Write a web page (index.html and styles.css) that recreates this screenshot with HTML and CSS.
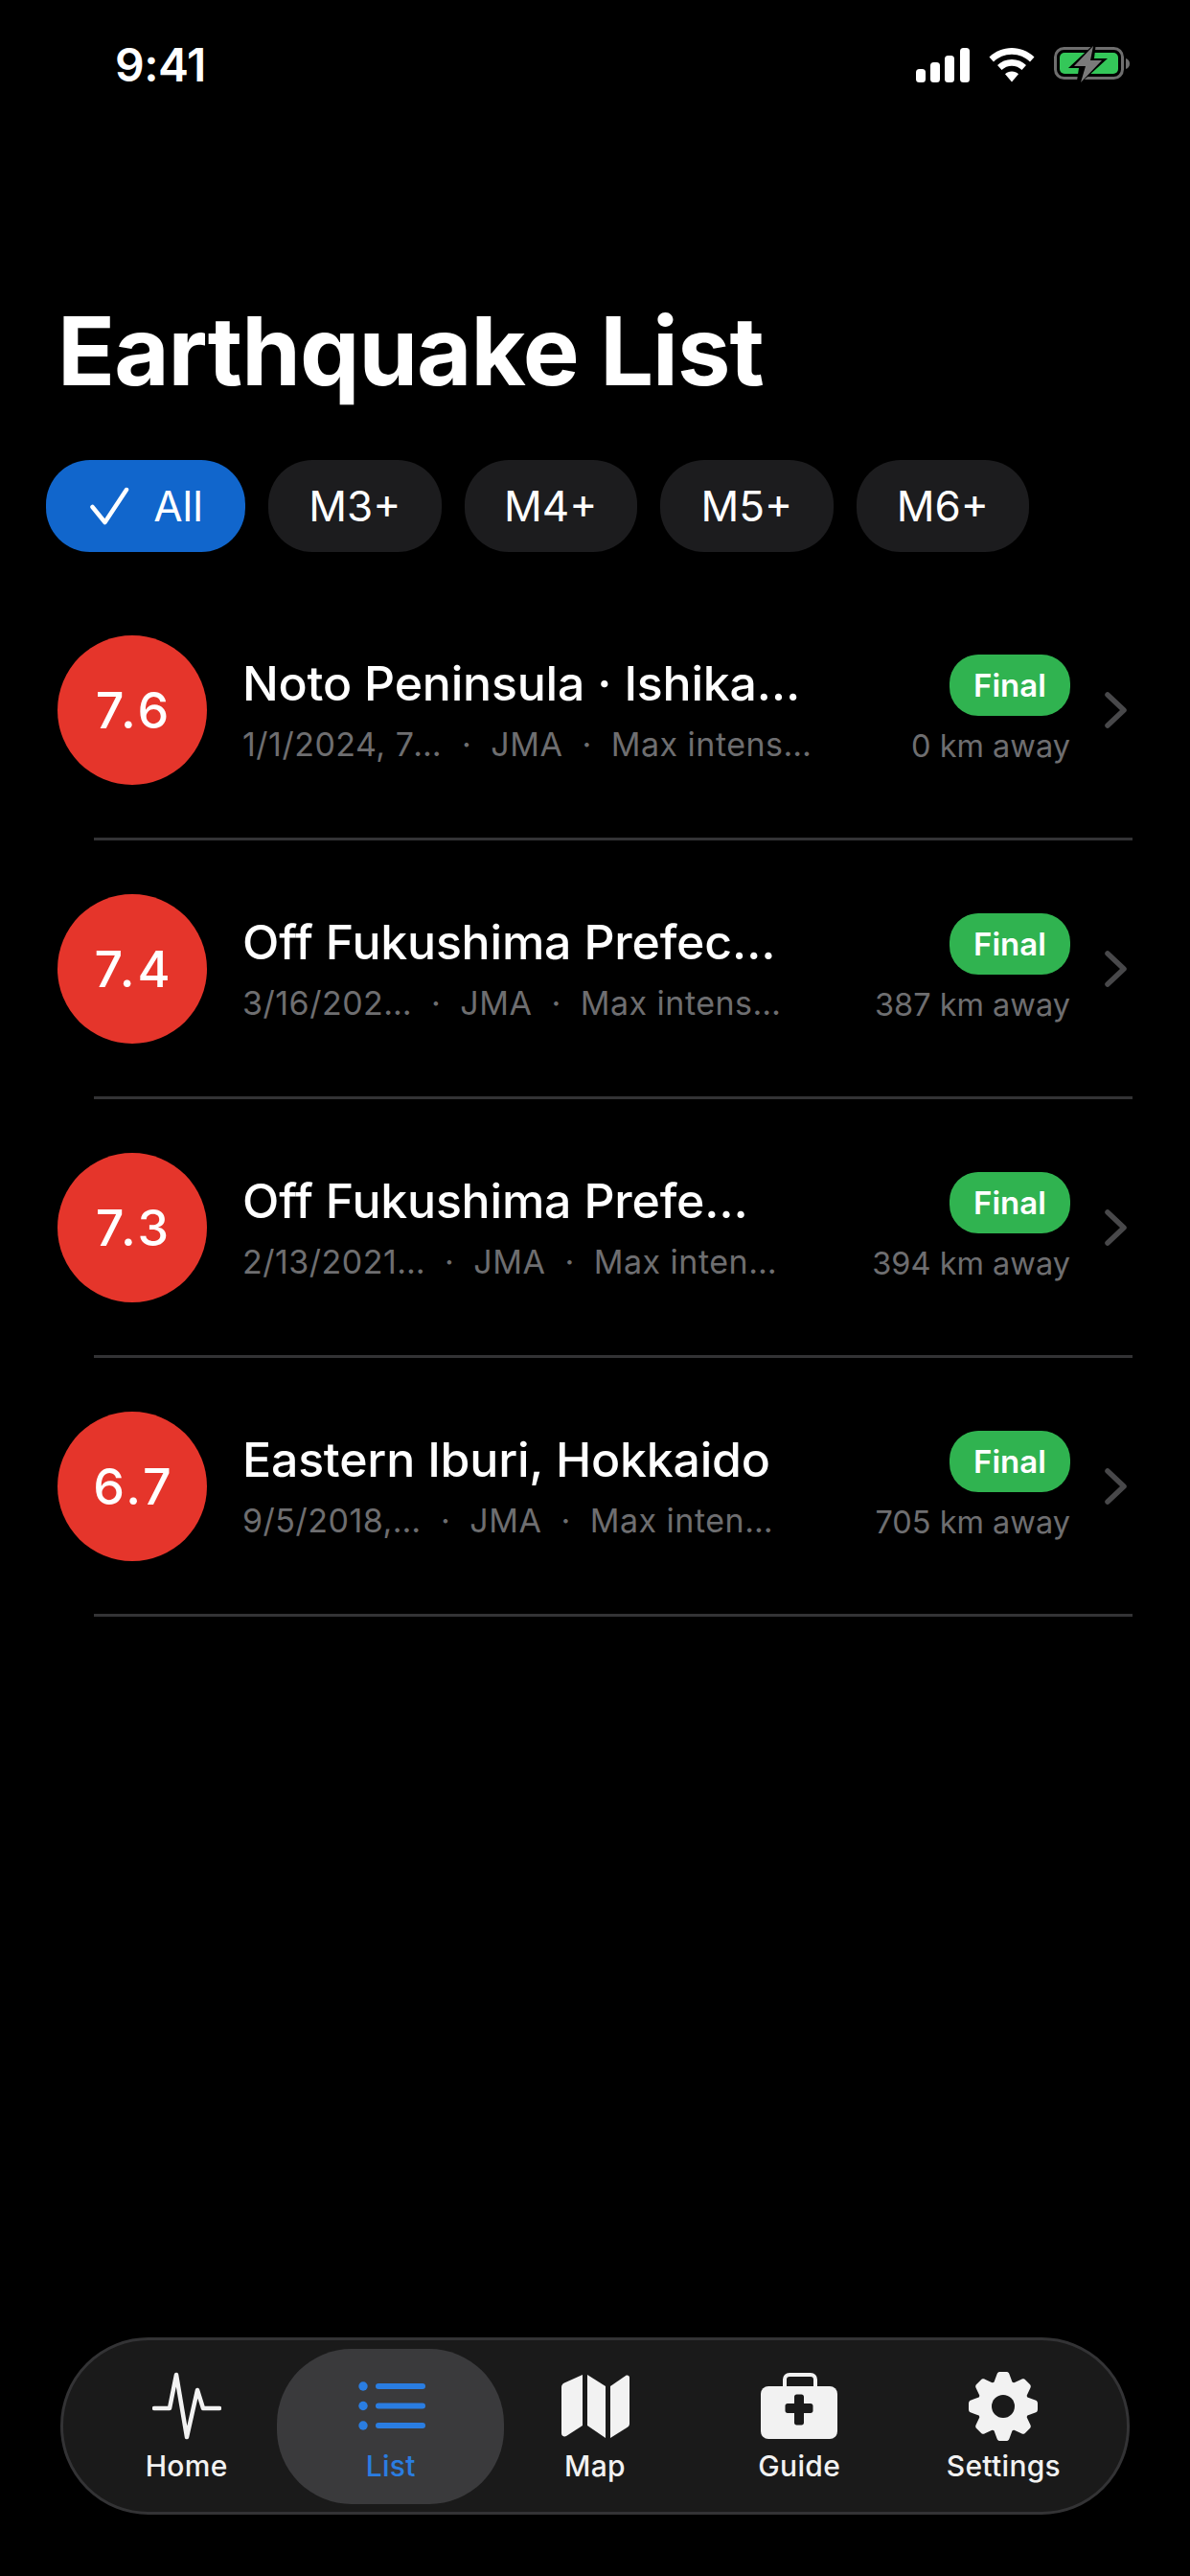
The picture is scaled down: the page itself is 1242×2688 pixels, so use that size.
FILE: index.html
```html
<!DOCTYPE html>
<html lang="en">
<head>
<meta charset="utf-8">
<title>Earthquake List</title>
<link rel="stylesheet" href="styles.css">
</head>
<body>
<div class="page">
  <header class="status">
    <span class="clock">9:41</span>
    <div class="status-icons">
      <svg class="ic-signal" width="56" height="36" viewBox="0 0 56 36"><rect x="0" y="22" width="10" height="14" rx="3.5"/><rect x="15" y="15" width="10" height="21" rx="3.5"/><rect x="30" y="8" width="10" height="28" rx="3.5"/><rect x="46" y="0" width="10" height="36" rx="3.5"/></svg>
      <svg class="ic-wifi" width="48" height="36" viewBox="0 0 48 36"><path d="M24 0C33 0 41 3.500 47.500 9.500L43 14.500C38 9.500 31.500 6.700 24 6.700S10 9.500 5 14.500L.5 9.500C7 3.500 15 0 24 0Z"/><path d="M24 12C30 12 35 14.300 39 18L34.500 23C31.500 20.300 28 18.800 24 18.800S16.500 20.300 13.500 23L9 18C13 14.300 18 12 24 12Z"/><path d="M24 24.500C26.800 24.500 29 25.500 31 27.200L24 35.500L17 27.200C19 25.500 21.200 24.500 24 24.500Z"/></svg>
      <svg class="ic-battery" width="80" height="44" viewBox="0 0 80 44"><rect x="1.500" y="5.500" width="70" height="31" rx="9" fill="none" stroke="#6e6e6e" stroke-width="3"/><path d="M75 16c2.500 .8 4 2.800 4 5.500s-1.500 4.700-4 5.500Z" fill="#6e6e6e"/><rect x="6" y="10" width="61" height="22" rx="5" fill="#34c759"/><path d="M44 -1L15 26H26L23 46L56 16H42Z" fill="#000"/><path d="M41 3L21 24H33L28 41L50 18H38Z" fill="#7a7a7a"/></svg>
    </div>
  </header>

  <h1 class="title">Earthquake List</h1>

  <nav class="chips">
    <button class="chip chip-on"><svg class="check" width="44" height="44" viewBox="0 0 44 44"><path d="M4.500 23L17.500 39L40 5" fill="none" stroke="#fff" stroke-width="4.500" stroke-linecap="round" stroke-linejoin="round"/></svg>All</button>
    <button class="chip">M3+</button>
    <button class="chip">M4+</button>
    <button class="chip">M5+</button>
    <button class="chip">M6+</button>
  </nav>

  <main class="list">
    <article class="row">
      <div class="mag">7.6</div>
      <div class="main">
        <div class="name">Noto Peninsula · Ishikawa</div>
        <div class="sub"><span class="date date-a">1/1/2024, 7:10:00 AM</span><span class="dot">·</span><span>JMA</span><span class="dot">·</span><span class="fit">Max intensity 7</span></div>
      </div>
      <div class="side"><span class="badge">Final</span><span class="dist">0 km away</span></div>
      <svg class="chev" width="24" height="38" viewBox="0 0 24 38"><path d="M3 3L20 19L3 35" fill="none" stroke="#48484a" stroke-width="5.500" stroke-linecap="round" stroke-linejoin="round"/></svg>
    </article>
    <div class="rule"></div>
    <article class="row">
      <div class="mag">7.4</div>
      <div class="main">
        <div class="name">Off Fukushima Prefecture</div>
        <div class="sub"><span class="date date-b">3/16/2022, 11:36:00 PM</span><span class="dot">·</span><span>JMA</span><span class="dot">·</span><span class="fit">Max intensity 6+</span></div>
      </div>
      <div class="side"><span class="badge">Final</span><span class="dist">387 km away</span></div>
      <svg class="chev" width="24" height="38" viewBox="0 0 24 38"><path d="M3 3L20 19L3 35" fill="none" stroke="#48484a" stroke-width="5.500" stroke-linecap="round" stroke-linejoin="round"/></svg>
    </article>
    <div class="rule"></div>
    <article class="row">
      <div class="mag">7.3</div>
      <div class="main">
        <div class="name name-short">Off Fukushima Prefecture</div>
        <div class="sub"><span class="date date-c">2/13/2021, 11:07:00 PM</span><span class="dot">·</span><span>JMA</span><span class="dot">·</span><span class="fit">Max intensity 6+</span></div>
      </div>
      <div class="side"><span class="badge">Final</span><span class="dist">394 km away</span></div>
      <svg class="chev" width="24" height="38" viewBox="0 0 24 38"><path d="M3 3L20 19L3 35" fill="none" stroke="#48484a" stroke-width="5.500" stroke-linecap="round" stroke-linejoin="round"/></svg>
    </article>
    <div class="rule"></div>
    <article class="row">
      <div class="mag">6.7</div>
      <div class="main">
        <div class="name">Eastern Iburi, Hokkaido</div>
        <div class="sub"><span class="date date-d">9/5/2018, 3:07:00 AM</span><span class="dot">·</span><span>JMA</span><span class="dot">·</span><span class="fit">Max intensity 7</span></div>
      </div>
      <div class="side"><span class="badge">Final</span><span class="dist">705 km away</span></div>
      <svg class="chev" width="24" height="38" viewBox="0 0 24 38"><path d="M3 3L20 19L3 35" fill="none" stroke="#48484a" stroke-width="5.500" stroke-linecap="round" stroke-linejoin="round"/></svg>
    </article>
    <div class="rule"></div>
  </main>

  <footer class="tabs">
    <div class="tab">
      <svg width="72" height="72" viewBox="0 0 72 72"><path d="M2 38H18L25 3L36 68L47 19L53 38H70" fill="none" stroke="#f2f2f2" stroke-width="4.500" stroke-linecap="round" stroke-linejoin="round"/></svg>
      <span>Home</span>
    </div>
    <div class="tab tab-on">
      <svg width="72" height="72" viewBox="0 0 72 72" fill="#2a7de1"><circle cx="7" cy="15" r="4.700"/><circle cx="7" cy="35.500" r="4.700"/><circle cx="7" cy="56" r="4.700"/><rect x="20" y="12" width="52" height="6" rx="3"/><rect x="20" y="32.500" width="52" height="6" rx="3"/><rect x="20" y="53" width="52" height="6" rx="3"/></svg>
      <span>List</span>
    </div>
    <div class="tab">
      <svg width="72" height="72" viewBox="0 0 72 72" fill="#f2f2f2"><path d="M23 3V56L6 67C3.500 68 1 67 1 64V16C1 14 2 12.500 4 11.500Z"/><path d="M28 3L47 15V69L28 56Z"/><path d="M52 15L68 4C70 3 72 4 72 6V54C72 56 71 57 69.500 58L52 69Z"/></svg>
      <span>Map</span>
    </div>
    <div class="tab">
      <svg width="80" height="72" viewBox="0 0 80 72"><path d="M25 15V8C25 5 27 3 30 3H52C55 3 57 5 57 8V15" fill="none" stroke="#f2f2f2" stroke-width="4"/><rect x="0" y="15" width="80" height="55" rx="8" fill="#f2f2f2"/><path d="M35 26C35 24.500 36 23.500 37.500 23.500H42.500C44 23.500 45 24.500 45 26V33H52C53.500 33 54.500 34 54.500 35.500V40.500C54.500 42 53.500 43 52 43H45V53C45 54.500 44 55.500 42.500 55.500H37.500C36 55.500 35 54.500 35 53V43H28C26.500 43 25.500 42 25.500 40.500V35.500C25.500 34 26.500 33 28 33H35Z" fill="#1a1a1a"/></svg>
      <span>Guide</span>
    </div>
    <div class="tab">
      <svg width="74" height="72" viewBox="-37 -36 74 72">
        <defs><path id="tooth" d="M-10 -24L-6.500 -33.500C-6 -35.500 -4.500 -36 -3 -36H3C4.500 -36 6 -35.500 6.500 -33.500L10 -24Z"/></defs>
        <g fill="#f2f2f2">
          <circle r="27"/>
          <use href="#tooth"/>
          <use href="#tooth" transform="rotate(45)"/>
          <use href="#tooth" transform="rotate(90)"/>
          <use href="#tooth" transform="rotate(135)"/>
          <use href="#tooth" transform="rotate(180)"/>
          <use href="#tooth" transform="rotate(225)"/>
          <use href="#tooth" transform="rotate(270)"/>
          <use href="#tooth" transform="rotate(315)"/>
        </g>
        <circle r="12" fill="#1a1a1a"/>
      </svg>
      <span>Settings</span>
    </div>
  </footer>
</div>
</body>
</html>
```

FILE: styles.css
```css
* { box-sizing: border-box; }
html, body { margin: 0; padding: 0; background: #000; }
body { font-family: Inter, "Noto Sans", sans-serif; color: #fff; }

.page {
  width: 1242px;
  height: 2688px;
  display: flex;
  flex-direction: column;
  overflow: hidden;
}

.status {
  display: flex;
  justify-content: space-between;
  align-items: center;
  height: 44px;
  margin-top: 46px;
  padding: 0 62px 0 120px;
}
.clock { font-size: 48px; font-weight: 600; line-height: 44px; letter-spacing: -0.5px; }
.status-icons { display: flex; align-items: center; gap: 20px; }
.status-icons svg { display: block; fill: #fff; }
.ic-battery { margin-top: -2px; }

.title {
  margin: 216px 0 0 60px;
  font-size: 99px;
  line-height: 120px;
  font-weight: 700;
  letter-spacing: -1px;
}

.chips {
  display: flex;
  gap: 24px;
  margin: 54px 0 0 48px;
}
.chip {
  height: 96px;
  width: 180.5px;
  border: 0;
  border-radius: 46px;
  background: #1c1c1e;
  color: #fff;
  font-family: inherit;
  font-size: 44px;
  display: flex;
  align-items: center;
  justify-content: center;
  padding: 0;
}
.chip-on { width: 208px; background: #1166cc; gap: 24px; }
.check { display: block; }

.list { flex: 1; margin-top: 31px; }
.row {
  display: flex;
  align-items: center;
  height: 267px;
  padding: 0 60px;
}
.rule { height: 3px; margin: 0 60px 0 98px; background: #333335; }

.mag {
  width: 156px;
  height: 156px;
  flex: none;
  border-radius: 50%;
  background: #e5352b;
  display: flex;
  align-items: center;
  justify-content: center;
  padding: 2px 0 0 3px;
  font-size: 52px;
  font-weight: 500;
  letter-spacing: 3px;
}
.main { flex: 1; min-width: 0; margin-left: 37px; margin-right: 97px; }
.name {
  font-size: 50px;
  line-height: 60px;
  font-weight: 550;
  letter-spacing: -0.2px;
  white-space: nowrap;
  overflow: hidden;
  text-overflow: ellipsis;
}
.name-short { margin-right: 20px; }
.sub {
  display: flex;
  margin-top: 12px;
  font-size: 34px;
  line-height: 44px;
  letter-spacing: 0.5px;
  color: #6e6e70;
  white-space: nowrap;
}
.date { flex: none; overflow: hidden; text-overflow: ellipsis; }
.date-a { width: 209px; }
.date-b { width: 177px; }
.date-c { width: 191px; }
.date-d { width: 187px; }
.fit { flex: 1 1 0; min-width: 0; overflow: hidden; text-overflow: ellipsis; }
.dot { margin: 0 20px; }

.side {
  flex: none;
  display: flex;
  flex-direction: column;
  align-items: flex-end;
  gap: 10px;
  padding-top: 3px;
}
.badge {
  width: 126px;
  height: 64px;
  border-radius: 30px;
  background: #30b350;
  display: flex;
  align-items: center;
  justify-content: center;
  font-size: 33px;
  font-weight: 600;
}
.dist { font-size: 32.5px; line-height: 44px; color: #6e6e70; }
.chev { flex: none; margin-left: 36px; margin-right: 5px; display: block; }

.tabs {
  display: flex;
  height: 185px;
  margin: 0 63px 64px 63px;
  padding: 0 22px;
  background: #1a1a1a;
  border: 3px solid #333335;
  border-radius: 92px;
  align-items: center;
}
.tab {
  position: relative;
  flex: 1;
  height: 162px;
  display: flex;
  flex-direction: column;
  align-items: center;
  justify-content: flex-start;
  padding-top: 24px;
  color: #f2f2f2;
  font-size: 30px;
  font-weight: 500;
  letter-spacing: 0.3px;
}
.tab svg { display: block; position: relative; }
.tab span { position: relative; margin-top: 7px; line-height: 38px; }
.tab-on { color: #2a7de1; }
.tab-on::before {
  content: "";
  position: absolute;
  inset: 0 -12px;
  border-radius: 78px;
  background: #3a3a3c;
}
```
